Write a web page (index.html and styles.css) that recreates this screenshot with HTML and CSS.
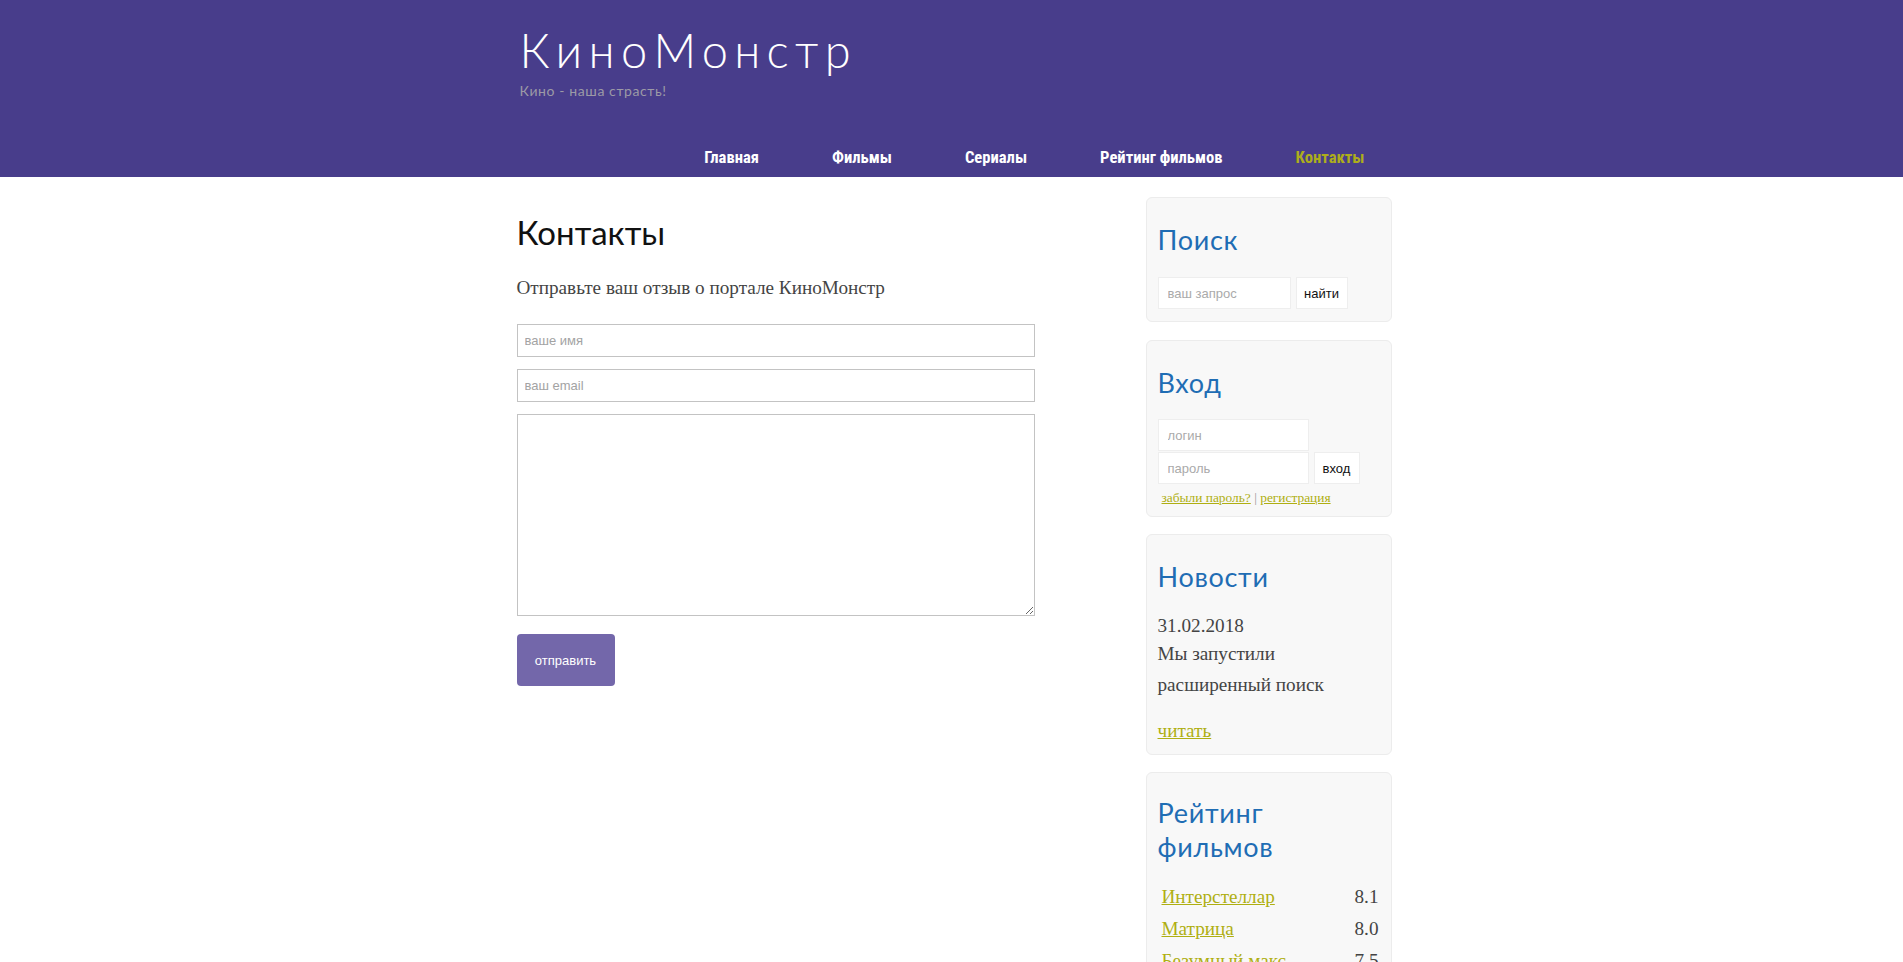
FILE: index.html
```html
<!DOCTYPE html>
<html lang="ru">
<head>
<meta charset="utf-8">
<title>КиноМонстр — Контакты</title>
<link rel="stylesheet" href="styles.css">
</head>
<body>
<header class="header">
  <div class="header-inner">
    <div class="brand">
      <div class="logo">КиноМонстр</div>
      <div class="tagline">Кино - наша страсть!</div>
    </div>
    <nav class="nav">
      <a class="nav-link" href="#">Главная</a>
      <a class="nav-link" href="#">Фильмы</a>
      <a class="nav-link" href="#">Сериалы</a>
      <a class="nav-link" href="#">Рейтинг фильмов</a>
      <a class="nav-link nav-link-active" href="#">Контакты</a>
    </nav>
  </div>
</header>

<div class="page">
  <main class="content">
    <h1 class="page-title">Контакты</h1>
    <p class="lead">Отправьте ваш отзыв о портале КиноМонстр</p>
    <form class="contact-form">
      <input class="field" type="text" placeholder="ваше имя">
      <input class="field" type="text" placeholder="ваш email">
      <textarea class="field field-area"></textarea>
      <button class="submit" type="button">отправить</button>
    </form>
  </main>

  <aside class="sidebar">
    <section class="box box-search">
      <h3 class="box-title">Поиск</h3>
      <div class="row">
        <input class="side-input side-input-search" type="text" placeholder="ваш запрос">
        <button class="side-btn side-btn-search" type="button">найти</button>
      </div>
    </section>

    <section class="box box-login">
      <h3 class="box-title">Вход</h3>
      <input class="side-input side-input-login" type="text" placeholder="логин">
      <div class="row row-pass">
        <input class="side-input side-input-login" type="password" placeholder="пароль">
        <button class="side-btn side-btn-login" type="button">вход</button>
      </div>
      <div class="login-links"><a href="#">забыли пароль?</a> | <a href="#">регистрация</a></div>
    </section>

    <section class="box box-news">
      <h3 class="box-title">Новости</h3>
      <p class="news-date">31.02.2018</p>
      <p class="news-text">Мы запустили<br>расширенный поиск</p>
      <a class="news-more" href="#">читать</a>
    </section>

    <section class="box box-rating">
      <h3 class="box-title">Рейтинг<br>фильмов</h3>
      <ul class="rating">
        <li class="rating-row"><a href="#">Интерстеллар</a><span>8.1</span></li>
        <li class="rating-row"><a href="#">Матрица</a><span>8.0</span></li>
        <li class="rating-row"><a href="#">Безумный макс</a><span>7.5</span></li>
      </ul>
    </section>
  </aside>
</div>
</body>
</html>
```

FILE: styles.css
```css
* { box-sizing: border-box; }

body {
  margin: 0;
  background: #ffffff;
  font-family: "Liberation Serif", "Times New Roman", serif;
  color: #444444;
}

/* Header */
.header {
  background: #483d8b;
  height: 177px;
}
.header-inner {
  width: 880px;
  margin: 0 auto;
  height: 100%;
  display: flex;
  flex-direction: column;
}
.brand {
  padding: 22px 0 0 8px;
}
.logo {
  font-family: Lato, "DejaVu Sans", sans-serif;
  font-weight: 300;
  font-size: 47px;
  line-height: 56px;
  letter-spacing: 6.3px;
  color: #ffffff;
}
.tagline {
  margin-top: 4px;
  font-family: Lato, "DejaVu Sans", sans-serif;
  font-weight: 400;
  font-size: 14px;
  line-height: 18px;
  letter-spacing: 0.6px;
  color: #9c9aa6;
}
.nav {
  margin-top: auto;
  display: flex;
  justify-content: flex-end;
  gap: 73px;
  padding-right: 27px;
  height: 40px;
  align-items: center;
}
.nav-link {
  font-family: "Liberation Sans Narrow", "Roboto Condensed", "DejaVu Sans Condensed", "DejaVu Sans", sans-serif;
  font-stretch: condensed;
  font-weight: 700;
  font-size: 16.6px;
  color: #ffffff;
  text-decoration: none;
}
.nav-link-active { color: #adad1b; }

/* Layout */
.page {
  width: 880px;
  margin: 0 auto;
  display: flex;
  align-items: flex-start;
}
.content {
  width: 524px;
  padding-left: 5px;
}
.sidebar {
  width: 246px;
  margin-left: auto;
  padding-top: 20px;
}

/* Main content */
.page-title {
  margin: 33px 0 0;
  font-family: Lato, "DejaVu Sans", sans-serif;
  font-weight: 400;
  font-size: 33px;
  line-height: 44px;
  color: #111111;
}
.lead {
  margin: 22px 0 0;
  font-size: 19.2px;
  line-height: 24px;
  color: #444444;
}
.contact-form {
  margin-top: 24px;
  display: flex;
  flex-direction: column;
  align-items: flex-start;
}
.field {
  width: 518px;
  height: 33px;
  margin: 0 0 12px;
  padding: 0 7px;
  border: 1px solid #c3c3c3;
  background: #ffffff;
  font-family: "Liberation Sans", Arial, sans-serif;
  font-size: 13px;
  color: #333333;
  outline: none;
}
.field::placeholder { color: #a3a3a3; }
.field-area {
  height: 202px;
  margin-bottom: 18px;
  resize: vertical;
}
.submit {
  width: 98px;
  height: 52px;
  border: none;
  border-radius: 4px;
  background: #7367aa;
  color: #ffffff;
  font-family: "Liberation Sans", Arial, sans-serif;
  font-size: 13px;
  cursor: pointer;
}

/* Sidebar */
.box {
  margin-bottom: 17px;
  padding: 0 12px 12px 11px;
  background: #f8f8f8;
  border: 1px solid #ececec;
  border-radius: 6px;
}
.box-search { margin-bottom: 18px; }
.box-title {
  margin: 25px 0 20px;
  font-family: Lato, "DejaVu Sans", sans-serif;
  font-weight: 400;
  font-size: 27px;
  line-height: 34px;
  letter-spacing: 0.7px;
  color: #1f6db4;
}
.row {
  display: flex;
  gap: 5px;
}
.side-input {
  height: 32px;
  padding: 0 9px;
  border: 1px solid #eeeeee;
  background: #ffffff;
  font-family: "Liberation Sans", Arial, sans-serif;
  font-size: 13px;
  color: #333333;
  outline: none;
}
.side-input::placeholder { color: #aaaaaa; }
.side-input-search { width: 133px; }
.side-input-login { width: 151px; display: block; }
.side-btn {
  height: 32px;
  padding: 0;
  border: 1px solid #eeeeee;
  background: #ffffff;
  font-family: "Liberation Sans", Arial, sans-serif;
  font-size: 13px;
  color: #111111;
}
.side-btn-search { width: 52px; }
.side-btn-login { width: 46px; }
.box-login .box-title { margin-bottom: 19px; }
.box-login { padding-bottom: 8px; }
.row-pass { margin-top: 1px; }
.login-links {
  margin-top: 4px;
  padding-left: 4px;
  font-size: 13.4px;
  line-height: 20px;
  color: #999999;
}
.login-links a,
.news-more,
.rating-row a {
  color: #afaf12;
  text-decoration: underline;
}

.news-date {
  margin: 19px 0 0;
  font-size: 19.2px;
  line-height: 24px;
  color: #444444;
}
.news-text {
  margin: 0;
  font-size: 19.2px;
  line-height: 31px;
  color: #444444;
}
.news-more {
  display: block;
  margin-top: 19px;
  font-size: 19.2px;
  line-height: 24px;
}
.box-news { padding-bottom: 11px; }

.box-rating .box-title { margin-top: 23px; margin-bottom: 0; }
.rating {
  list-style: none;
  margin: 17px 0 0;
  padding: 0 0 0 4px;
}
.rating-row {
  display: flex;
  justify-content: space-between;
  font-size: 19.2px;
  line-height: 32px;
  color: #444444;
}
```
